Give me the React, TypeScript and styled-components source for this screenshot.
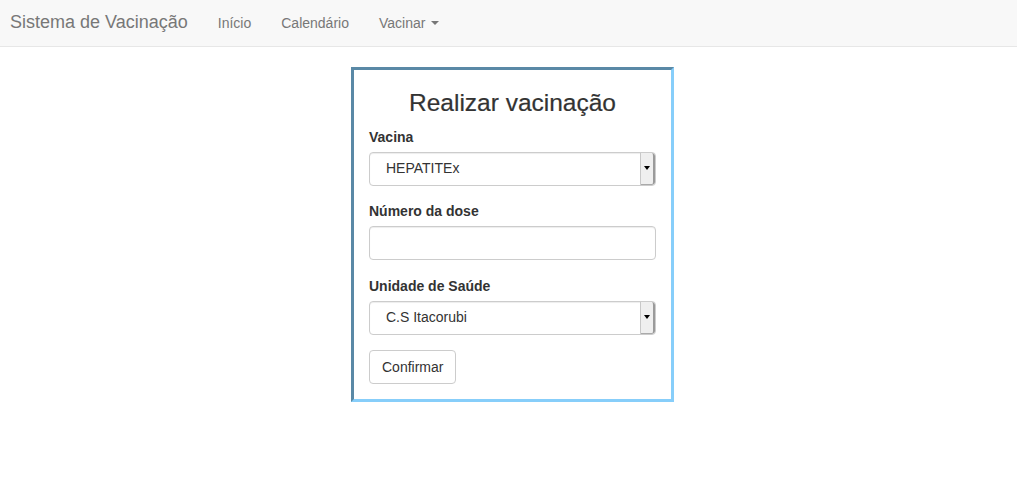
import React from "react";
import styled, { createGlobalStyle } from "styled-components";

const Global = createGlobalStyle`
  html, body { margin: 0; padding: 0; background: #fff; }
  body {
    font-family: "Liberation Sans", Arial, Helvetica, sans-serif;
    font-size: 14px;
    line-height: 1.42857;
    color: #333;
  }
  * { box-sizing: border-box; }
`;

const Navbar = styled.nav`
  height: 47px;
  background: #f8f8f8;
  border-bottom: 1px solid #e7e7e7;
  display: flex;
  align-items: center;
  padding-left: 10px;
`;

const Brand = styled.a`
  font-size: 18px;
  color: #777;
  text-decoration: none;
  margin-right: 30px;
  line-height: 20px;
  position: relative;
  top: -1px;
`;

const NavList = styled.ul`
  display: flex;
  list-style: none;
  margin: 0;
  padding: 0;
  gap: 30px;
`;

const NavLink = styled.a`
  color: #777;
  text-decoration: none;
  font-size: 14px;
  line-height: 20px;
  display: flex;
  align-items: center;
`;

const Caret = styled.span`
  display: inline-block;
  width: 0;
  height: 0;
  margin-left: 6px;
  border-top: 4px solid #777;
  border-left: 4px solid transparent;
  border-right: 4px solid transparent;
`;

const Main = styled.main`
  padding-top: 20px;
  padding-left: 351px;
`;

const Panel = styled.section`
  width: 323px;
  border-style: solid;
  border-width: 3px;
  border-color: #5a89a6 #87cefa #87cefa #5a89a6;
  padding: 0 15px 15px;
`;

const Title = styled.h3`
  margin: 20px 0 10px;
  font-size: 24.5px;
  font-weight: 500;
  line-height: 1.1;
  text-align: center;
  color: #333;
  -webkit-text-stroke: 0.2px #333;
`;

const Group = styled.div<{ $gap?: number }>`
  margin-bottom: ${(p) => p.$gap ?? 15}px;
`;

const Label = styled.label`
  display: block;
  font-weight: bold;
  margin-bottom: 5px;
  line-height: 20px;
`;

const SelectBox = styled.div`
  height: 34px;
  display: flex;
  align-items: stretch;
  border: 1px solid #ccc;
  border-radius: 4px;
  box-shadow: inset 0 1px 1px rgba(0, 0, 0, 0.075);
  background: #fff;
  overflow: hidden;
`;

const SelectValue = styled.span`
  flex: 1;
  display: flex;
  align-items: center;
  padding-left: 16px;
  color: #333;
`;

const ArrowBox = styled.span`
  width: 15px;
  display: flex;
  align-items: center;
  justify-content: center;
  background: #efefef;
  border-left: 1px solid #c8c8c8;
  border-right: 2px solid #9a9a9a;
  border-bottom: 1px solid #aaa;
  border-radius: 0 3px 3px 0;
`;

const ArrowTri = styled.span`
  width: 0;
  height: 0;
  border-top: 4px solid #000;
  border-left: 3px solid transparent;
  border-right: 3px solid transparent;
`;

const Input = styled.input`
  display: block;
  width: 100%;
  height: 34px;
  border: 1px solid #ccc;
  border-radius: 4px;
  box-shadow: inset 0 1px 1px rgba(0, 0, 0, 0.075);
  padding: 6px 12px;
  font: inherit;
`;

const Button = styled.button`
  height: 34px;
  padding: 6px 12px;
  background: #fff;
  border: 1px solid #ccc;
  border-radius: 4px;
  font-family: inherit;
  font-size: 14px;
  color: #333;
  line-height: 20px;
`;

const Select: React.FC<{ value: string }> = ({ value }) => (
  <SelectBox>
    <SelectValue>{value}</SelectValue>
    <ArrowBox>
      <ArrowTri />
    </ArrowBox>
  </SelectBox>
);

export default function App() {
  return (
    <>
      <Global />
      <Navbar>
        <Brand href="#">Sistema de Vacinação</Brand>
        <NavList>
          <li><NavLink href="#">Início</NavLink></li>
          <li><NavLink href="#">Calendário</NavLink></li>
          <li><NavLink href="#">Vacinar<Caret /></NavLink></li>
        </NavList>
      </Navbar>
      <Main>
        <Panel>
          <Title>Realizar vacinação</Title>
          <Group>
            <Label>Vacina</Label>
            <Select value="HEPATITEx" />
          </Group>
          <Group $gap={16}>
            <Label>Número da dose</Label>
            <Input type="text" />
          </Group>
          <Group>
            <Label>Unidade de Saúde</Label>
            <Select value="C.S Itacorubi" />
          </Group>
          <Button>Confirmar</Button>
        </Panel>
      </Main>
    </>
  );
}
